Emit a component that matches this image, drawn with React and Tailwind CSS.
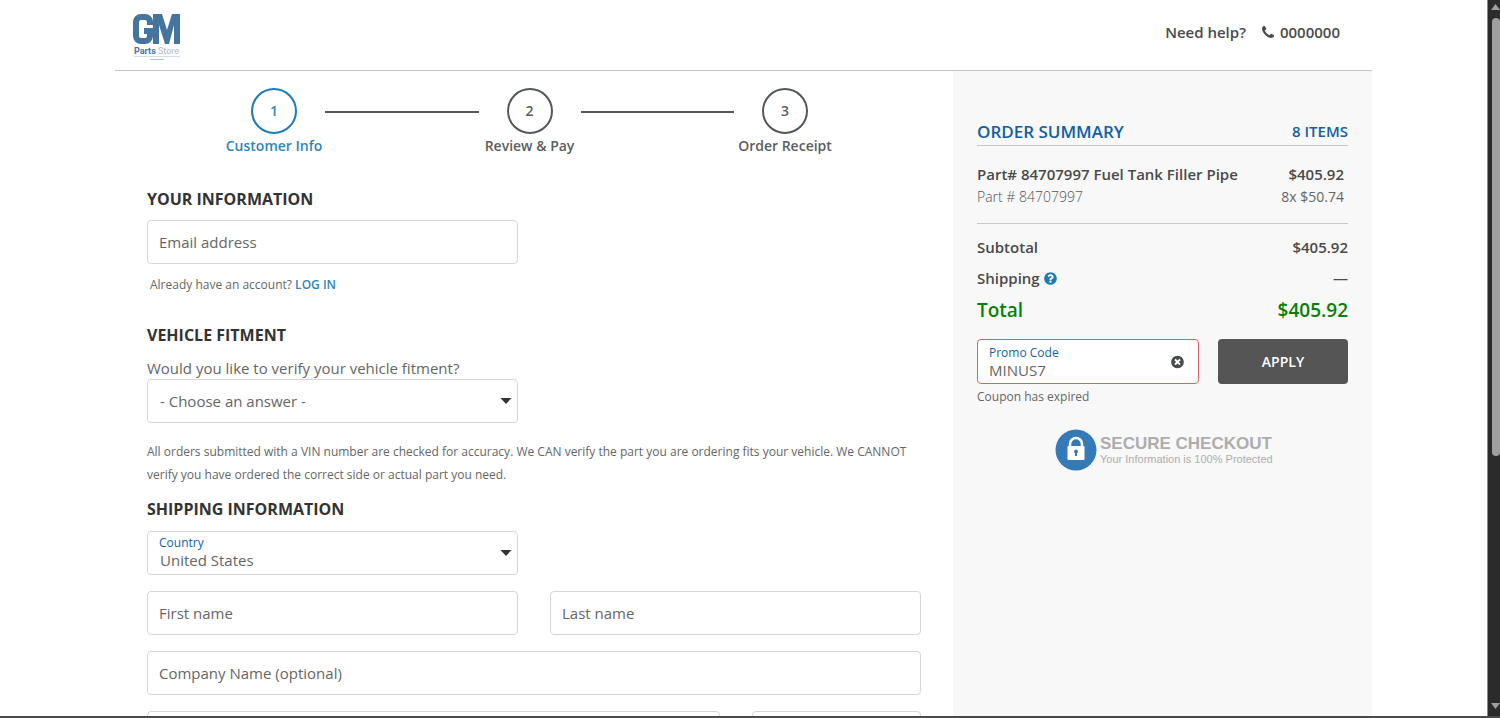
import React, { useState } from "react";
import { FaQuestionCircle, FaTimesCircle } from "react-icons/fa";

const steps = ["Customer Info", "Review & Pay", "Order Receipt"];

const Logo = () => (
  <svg width="50" height="48" viewBox="0 0 50 48" role="img" aria-label="GM Parts Store">
    <path
      fill="none"
      stroke="#45749f"
      strokeWidth="6"
      d="M18 12V9c0-3-2-5-5-5H9c-3 0-5 2-5 5v14c0 3 2 5 5 5h4c3 0 5-2 5-5v-5h-6"
    />
    <path fill="#45749f" d="M21 1h9l5 16 5-16h8v30h-6V12l-5 19h-4l-6-19v19h-6Z" />
    <text x="2" y="41" fontSize="9" fontWeight="700" fill="#45749f" fontFamily="Roboto, sans-serif">
      Parts
    </text>
    <text x="26" y="41" fontSize="9" fontWeight="400" fill="#a9bac8" fontFamily="Roboto, sans-serif">
      Store
    </text>
    <path d="M2 43.5h46" stroke="#d3dfe6" />
    <path d="M18 46.5h14" stroke="#a5c8d4" />
  </svg>
);

const PhoneIcon = () => (
  <svg width="12" height="12" viewBox="0 128 1408 1408" fill="currentColor" aria-hidden="true">
    <path d="M1408 1240q0 27-10 70.5t-21 68.5q-21 50-122 106-94 51-186 51-27 0-53-3.5t-57.5-12.5-47-14.5-55.5-20.5-49-18q-98-35-175-83-127-79-264-216t-216-264q-48-77-83-175-3-9-18-49t-20.5-55.5-14.5-47-12.5-57.5-3.5-53q0-92 51-186 56-101 106-122 25-11 68.5-21t70.5-10q14 0 21 3 18 6 53 76 11 19 30 54t35 63.5 31 53.5q3 4 17.5 25t21.5 35.5 7 28.5q0 20-28.5 50t-62 55-62 53-28.5 46q0 9 5 22.5t8.5 20.5 14 24 11.5 19q76 137 174 235t235 174q2 1 19 11.5t24 14 20.5 8.5 22.5 5q18 0 46-28.5t53-62 55-62 50-28.5q14 0 28.5 7t35.5 21.5 25 17.5q25 15 53.5 31t63.5 35 54 30q70 35 76 53 3 7 3 21z" />
  </svg>
);

const TextField = ({ id, label, type = "text" }) => (
  <div className="relative min-w-0">
    <input
      id={id}
      type={type}
      placeholder=" "
      className="peer block h-11 w-full rounded border border-[#d6d6d6] bg-white px-3 text-[15px] text-[#555] outline-none"
    />
    <label
      htmlFor={id}
      className="pointer-events-none absolute left-3 top-[3px] text-xs leading-[18px] text-[#125fa6] peer-placeholder-shown:top-3 peer-placeholder-shown:text-[15px] peer-placeholder-shown:leading-5 peer-placeholder-shown:text-[#666]"
    >
      {label}
    </label>
  </div>
);

const Caret = () => (
  <svg
    width="12"
    height="6"
    viewBox="0 0 12 6"
    className="pointer-events-none absolute right-1.5 top-1/2 -translate-y-1/2"
  >
    <path d="M0.5 0h11L6 6Z" fill="#333" />
  </svg>
);

const Heading = ({ children }) => (
  <h2 className="text-base leading-6 font-bold text-[#333]">{children}</h2>
);

const Step = ({ number, label, active }) => (
  <li
    className={
      active
        ? "w-[102px] flex flex-col items-center text-[#2d86bb]"
        : "w-[102px] flex flex-col items-center text-[#5b5e60]"
    }
  >
    <span
      className={
        active
          ? "flex size-[46px] items-center justify-center rounded-full border-2 border-[#1c7db5]"
          : "flex size-[46px] items-center justify-center rounded-full border-2 border-[#53575a]"
      }
    >
      {number}
    </span>
    <span className="leading-6 whitespace-nowrap">{label}</span>
  </li>
);

const OrderSummary = () => {
  const [promo, setPromo] = useState("MINUS7");

  return (
    <aside className="w-1/3 bg-[#f8f8f8] pt-[49px] pl-6 pr-6 text-[15px] leading-6 font-semibold text-[#4a4a4a]">
      <div className="flex items-start justify-between border-b border-[#c8c8c8] pb-px text-[#125fa6]">
        <h2 className="text-[17px] leading-6">ORDER SUMMARY</h2>
        <span className="leading-[22px]">8 ITEMS</span>
      </div>

      <div className="mt-4 flex justify-between border-b border-[#c8c8c8] pb-4 pr-1">
        <div>
          <p>Part# 84707997 Fuel Tank Filler Pipe</p>
          <p className="text-sm leading-[21px] font-light text-[#555]">Part # 84707997</p>
        </div>
        <div className="text-right">
          <p>$405.92</p>
          <p className="text-sm leading-[21px] font-normal text-[#666]">8x $50.74</p>
        </div>
      </div>

      <div className="mt-[11px] flex justify-between">
        <span>Subtotal</span>
        <span>$405.92</span>
      </div>
      <div className="mt-[7px] flex justify-between">
        <span className="flex items-center gap-1">
          Shipping
          <button type="button" aria-label="Shipping help">
            <FaQuestionCircle className="size-[13px] text-[#1c7db5]" />
          </button>
        </span>
        <span>—</span>
      </div>
      <div className="mt-[5px] flex justify-between text-[19px] leading-[30px] text-[#088008]">
        <span>Total</span>
        <span>$405.92</span>
      </div>

      <div className="mt-3.5 flex gap-[19px]">
        <div className="relative h-[45px] min-w-0 flex-1 rounded border border-[#dc6262] bg-white px-[11px] pt-1 font-normal">
          <label htmlFor="promo" className="block text-xs leading-[18px] text-[#125fa6]">
            Promo Code
          </label>
          <input
            id="promo"
            value={promo}
            onChange={(e) => setPromo(e.target.value)}
            className="block h-4 w-40 text-[15px] leading-4 text-[#666] outline-none"
          />
          <button
            type="button"
            aria-label="Clear promo code"
            onClick={() => setPromo("")}
            className="absolute right-3.5 top-1/2 -translate-y-1/2"
          >
            <FaTimesCircle className="size-[13px] text-[#484c4e]" />
          </button>
        </div>
        <button type="button" className="h-[45px] w-[130px] rounded bg-[#555] text-sm text-white">
          APPLY
        </button>
      </div>
      <p className="mt-[3px] text-xs leading-5 font-normal text-[#666]">Coupon has expired</p>

      <div className="mt-[22px] flex justify-center">
        <svg width="224" height="42" viewBox="0 0 224 42" role="img" aria-label="Secure checkout">
          <circle cx="25" cy="21" r="20.5" fill="#337ab7" />
          <path d="M19 19v-4a6 6 0 0 1 12 0v4" fill="none" stroke="#fff" strokeWidth="2.5" />
          <rect x="16.5" y="17" width="17" height="14" rx="1" fill="#fff" />
          <path d="M25 20.5a2 2 0 0 1 1 3.7V27h-2v-2.8a2 2 0 0 1 1-3.7Z" fill="#337ab7" />
          <text x="49" y="20" fontSize="17" fontWeight="700" fill="#adadad" fontFamily="Liberation Sans, sans-serif">
            SECURE CHECKOUT
          </text>
          <text x="49" y="34" fontSize="11" fontWeight="400" fill="#adadad" fontFamily="Liberation Sans, sans-serif">
            Your Information is 100% Protected
          </text>
        </svg>
      </div>
    </aside>
  );
};

const CheckoutForm = () => (
  <main className="w-2/3 px-8 pt-[17px] text-[15px] text-[#666]">
    <ol className="flex pl-[76px] pr-[85px] text-sm font-semibold">
      {steps.map((label, i) => (
        <React.Fragment key={label}>
          {i > 0 && <li aria-hidden="true" className="mt-[23px] h-0.5 flex-1 bg-[#53575a]" />}
          <Step number={i + 1} label={label} active={i === 0} />
        </React.Fragment>
      ))}
    </ol>

    <form>
      {/* Your Information */}
      <section className="mt-[29px]">
        <Heading>YOUR INFORMATION</Heading>
        <div className="mt-[9px] grid grid-cols-2 gap-8">
          <TextField id="email" label="Email address" type="email" />
        </div>
        <p className="mt-[11px] pl-[3px] text-xs leading-5">
          Already have an account?{" "}
          <a href="#login" className="font-semibold text-[#2d86bb]">
            LOG IN
          </a>
        </p>
      </section>

      {/* Vehicle Fitment */}
      <section className="mt-7">
        <Heading>VEHICLE FITMENT</Heading>
        <label htmlFor="fitment" className="mt-2.5 block leading-[22px]">
          Would you like to verify your vehicle fitment?
        </label>
        <div className="grid grid-cols-2 gap-8">
          <div className="relative">
            <select
              id="fitment"
              className="block h-11 w-full appearance-none rounded border border-[#d6d6d6] bg-white px-3 outline-none"
            >
              <option>- Choose an answer -</option>
              <option>Yes</option>
              <option>No</option>
            </select>
            <Caret />
          </div>
        </div>
        <p className="mt-[17px] text-xs leading-[23px]">
          All orders submitted with a VIN number are checked for accuracy. We CAN verify the part you
          are ordering fits your vehicle. We CANNOT verify you have ordered the correct side or actual
          part you need.
        </p>
      </section>

      {/* Shipping Information */}
      <section className="mt-[11px]">
        <Heading>SHIPPING INFORMATION</Heading>
        <div className="mt-2.5 grid grid-cols-2 gap-x-8 gap-y-4">
          <div className="relative">
            <label
              htmlFor="country"
              className="pointer-events-none absolute left-3 top-[3px] text-xs leading-[18px] text-[#125fa6]"
            >
              Country
            </label>
            <select
              id="country"
              className="block h-11 w-full appearance-none rounded border border-[#d6d6d6] bg-white px-3 pt-3.5 outline-none"
            >
              <option>United States</option>
              <option>Canada</option>
            </select>
            <Caret />
          </div>
          <div />
          <TextField id="firstName" label="First name" />
          <TextField id="lastName" label="Last name" />
          <div className="col-span-2">
            <TextField id="company" label="Company Name (optional)" />
          </div>
        </div>
        <div className="mt-4 flex gap-8">
          <div className="flex-1">
            <TextField id="street" label="Street address" />
          </div>
          <div className="w-[169px]">
            <TextField id="apt" label="Apt / Suite" />
          </div>
        </div>
      </section>
    </form>
  </main>
);

const App = () => (
  <div className="flex h-screen flex-col overflow-hidden bg-white font-['Open_Sans','Noto_Sans',sans-serif]">
    <div className="flex min-h-0 flex-1">
      <div className="min-w-0 flex-1 overflow-hidden">
        <div className="mx-auto flex min-h-full max-w-[1257px] flex-col">
          <header className="flex h-[71px] shrink-0 items-start justify-between border-b border-[#c4c4c4] pl-[17px] pr-8 pt-[13px]">
            <Logo />
            <div className="mt-[7px] flex items-center text-[15px] leading-6 font-semibold text-[#4a4a4a]">
              Need help?
              <a href="tel:0000000" className="ml-4 flex items-center gap-1.5">
                <PhoneIcon />
                0000000
              </a>
            </div>
          </header>
          <div className="flex flex-1">
            <CheckoutForm />
            <OrderSummary />
          </div>
        </div>
      </div>

      {/* Scroll bar */}
      <div className="flex w-[13px] flex-col items-end border-l border-[#8a8a8a] bg-[#2b2b2b]">
        <svg width="9" height="18" viewBox="0 0 9 18">
          <path d="M0 10h9L4.5 4Z" fill="#a0a0a0" />
        </svg>
        <div className="h-[438px] w-2 rounded-full bg-[#a0a0a0]" />
        <svg width="9" height="18" viewBox="0 0 9 18" className="mt-auto">
          <path d="M0 5h9L4.5 11Z" fill="#a0a0a0" />
        </svg>
      </div>
    </div>
    <div className="h-0.5 bg-[#4a4a4a]" />
  </div>
);

export default App;
